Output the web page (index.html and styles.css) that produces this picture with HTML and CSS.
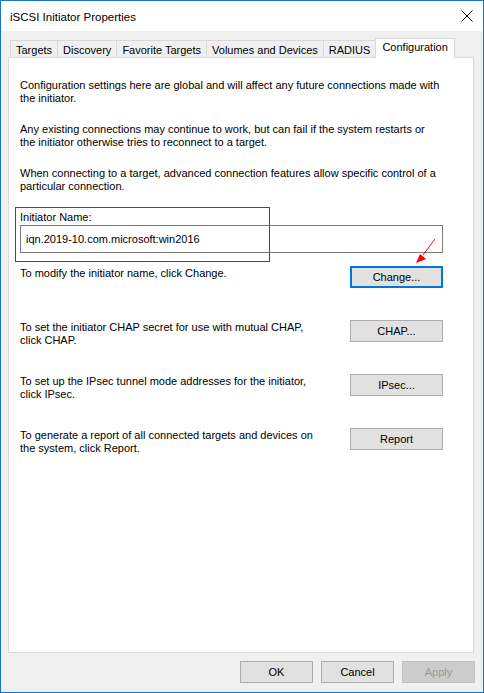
FILE: index.html
```html
<!DOCTYPE html>
<html lang="en">
<head>
  <meta charset="UTF-8">
  <title>iSCSI Initiator Properties</title>
  <link rel="stylesheet" href="styles.css">
</head>
<body>

  <div class="janela">
    <div class="barra-titulo">
      <span class="titulo">iSCSI Initiator Properties</span>
      <svg class="fechar" width="12" height="12" viewBox="0 0 12 12">
        <path d="M0.5 0.5 L11.5 11.5 M11.5 0.5 L0.5 11.5" stroke="#000" stroke-width="1" fill="none"/>
      </svg>
    </div>

    <div class="abas">
      <div class="aba">Targets</div>
      <div class="aba">Discovery</div>
      <div class="aba">Favorite Targets</div>
      <div class="aba">Volumes and Devices</div>
      <div class="aba">RADIUS</div>
      <div class="aba ativa">Configuration</div>
    </div>

    <div class="painel">
      <p>Configuration settings here are global and will affect any future connections made with<br>the initiator.</p>
      <p>Any existing connections may continue to work, but can fail if the system restarts or<br>the initiator otherwise tries to reconnect to a target.</p>
      <p>When connecting to a target, advanced connection features allow specific control of a<br>particular connection.</p>

      <div class="grupo-nome">
        <label for="nome-iniciador">Initiator Name:</label>
        <input id="nome-iniciador" type="text" value="iqn.2019-10.com.microsoft:win2016" readonly>
      </div>

      <div class="acoes">
        <div class="acao">
          <p>To modify the initiator name, click Change.</p>
          <button class="botao padrao">Change...</button>
        </div>
        <div class="acao">
          <p>To set the initiator CHAP secret for use with mutual CHAP,<br>click CHAP.</p>
          <button class="botao">CHAP...</button>
        </div>
        <div class="acao">
          <p>To set up the IPsec tunnel mode addresses for the initiator,<br>click IPsec.</p>
          <button class="botao">IPsec...</button>
        </div>
        <div class="acao">
          <p>To generate a report of all connected targets and devices on<br>the system, click Report.</p>
          <button class="botao">Report</button>
        </div>
      </div>
    </div>

    <div class="rodape">
      <button class="botao rodape-botao">OK</button>
      <button class="botao rodape-botao">Cancel</button>
      <button class="botao rodape-botao" disabled>Apply</button>
    </div>

    <!-- marcação vermelha do print -->
    <svg class="marcacao" width="430" height="60" viewBox="0 0 430 60">
      <rect x="0.5" y="0.5" width="254" height="54" fill="none" stroke="#ff0000" stroke-width="1" shape-rendering="crispEdges"/>
      <path d="M420 32 L408 48" stroke="#ff0000" stroke-width="1" fill="none"/>
      <path d="M401 56 L405 47 L411 52 Z" fill="#ff0000"/>
    </svg>
  </div>

</body>
</html>
```

FILE: styles.css
```css
:root {
  --cor-borda-janela: #1a73c9;
  --cor-fundo: #f0f0f0;
  --cor-linha: #d9d9d9;
  --cor-botao: #e1e1e1;
  --cor-botao-borda: #adadad;
  --cor-foco: #0078d7;

  --fonte: 'Liberation Sans', Arial, sans-serif;
}

* {
  margin: 0;
  padding: 0;
  box-sizing: border-box;
}

body {
  font-family: var(--fonte);
  font-size: 11px;
  line-height: 13px;
  color: #000;
  background-color: #fff;
}

.janela {
  position: relative;
  width: 484px;
  height: 693px;
  border: 1px solid var(--cor-borda-janela);
  background-color: var(--cor-fundo);
  display: flex;
  flex-direction: column;
}

.barra-titulo {
  height: 30px;
  background-color: #fff;
  display: flex;
  align-items: center;
  justify-content: space-between;
  padding: 0 10px 0 9px;
}

.titulo {
  padding-top: 2px;
  font-size: 11.5px;
}

.abas {
  position: relative;
  z-index: 1;
  display: flex;
  align-items: flex-end;
  height: 20px;
  margin-top: 7px;
  margin-bottom: -1px;
  padding-left: 9px;
}

.aba {
  height: 17px;
  margin-bottom: 1px;
  padding: 3px 5px 0;
  border: 1px solid var(--cor-linha);
  border-bottom: none;
  background-color: var(--cor-fundo);
  white-space: nowrap;
}

.aba + .aba {
  margin-left: -1px;
}

.aba.ativa {
  height: 20px;
  margin-bottom: 0;
  padding: 2px 6px 0;
  background-color: #fff;
}

.painel {
  height: 596px;
  margin: 0 9px 0 7px;
  padding: 21px 30px 0 11px;
  background-color: #fff;
  border: 1px solid var(--cor-linha);
}

.painel p {
  margin-bottom: 18px;
  white-space: nowrap;
}

.grupo-nome {
  display: flex;
  flex-direction: column;
  gap: 1px;
  margin-top: 1px;
}

.grupo-nome input {
  height: 28px;
  padding: 0 5px;
  border: 1px solid #7a7a7a;
  font-family: var(--fonte);
  font-size: 11px;
  color: #000;
  outline: none;
}

.acoes {
  display: grid;
  grid-auto-rows: 54px;
  margin-top: 13px;
}

.acao {
  display: flex;
  justify-content: space-between;
  align-items: flex-start;
}

.acao p {
  margin: 0;
  padding-top: 1px;
}

.botao {
  height: 22px;
  border: 1px solid var(--cor-botao-borda);
  background-color: var(--cor-botao);
  font-family: var(--fonte);
  font-size: 11px;
  color: #000;
}

.acao .botao {
  width: 93px;
}

.botao.padrao {
  border: 2px solid var(--cor-foco);
}

.botao:disabled {
  background-color: #cccccc;
  border-color: #bfbfbf;
  color: #9a9a9a;
}

.rodape {
  display: flex;
  justify-content: flex-end;
  gap: 8px;
  padding: 8px 8px 0 0;
}

.rodape-botao {
  width: 73px;
}

.marcacao {
  position: absolute;
  z-index: 2;
  left: 14px;
  top: 206px;
}
```
